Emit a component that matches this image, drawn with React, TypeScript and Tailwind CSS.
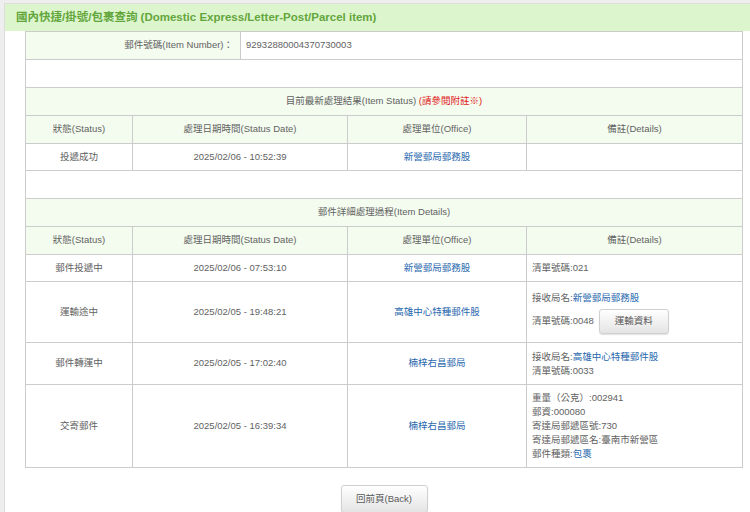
import React from 'react';

const font = { fontFamily: '"Liberation Sans", Arial, "Noto Sans CJK TC", sans-serif' };

type Detail = { label: string; value: string; link?: boolean };

type Row = {
  status: string;
  date: string;
  office: string;
  height: string;
  details: Detail[];
  button?: boolean;
};

const latest: Row[] = [
  { status: '投遞成功', date: '2025/02/06 - 10:52:39', office: '新營郵局郵務股', height: 'h-[27px]', details: [] },
];

const history: Row[] = [
  {
    status: '郵件投遞中',
    date: '2025/02/06 - 07:53:10',
    office: '新營郵局郵務股',
    height: 'h-[27px]',
    details: [{ label: '清單號碼:', value: '021' }],
  },
  {
    status: '運輸途中',
    date: '2025/02/05 - 19:48:21',
    office: '高雄中心特種郵件股',
    height: 'h-[61px]',
    details: [
      { label: '接收局名:', value: '新營郵局郵務股', link: true },
      { label: '清單號碼:', value: '0048' },
    ],
    button: true,
  },
  {
    status: '郵件轉運中',
    date: '2025/02/05 - 17:02:40',
    office: '楠梓右昌郵局',
    height: 'h-[42px]',
    details: [
      { label: '接收局名:', value: '高雄中心特種郵件股', link: true },
      { label: '清單號碼:', value: '0033' },
    ],
  },
  {
    status: '交寄郵件',
    date: '2025/02/05 - 16:39:34',
    office: '楠梓右昌郵局',
    height: 'h-[83px]',
    details: [
      { label: '重量（公克）:', value: '002941' },
      { label: '郵資:', value: '000080' },
      { label: '寄達局郵遞區號:', value: '730' },
      { label: '寄達局郵遞區名:', value: '臺南市新營區' },
      { label: '郵件種類:', value: '包裹', link: true },
    ],
  },
];

const cell = 'border-r border-b border-[#cccccc] flex items-center';

const GrayButton = ({ children, className }: { children: React.ReactNode; className?: string }) => (
  <button
    className={`border border-[#d0d0d0] rounded-[3px] bg-gradient-to-b from-[#ffffff] to-[#e4e4e4] text-[#5a5a5a] shadow-[0_1px_1px_rgba(0,0,0,0.12)] ${className ?? ''}`}
    style={font}
  >
    {children}
  </button>
);

const ColumnHeader = () => (
  <div className="flex h-[28px] bg-[#f4fcef]">
    <div className={`${cell} w-[107px] justify-center`}>狀態(Status)</div>
    <div className={`${cell} w-[215px] justify-center`}>處理日期時間(Status Date)</div>
    <div className={`${cell} w-[179px] justify-center`}>處理單位(Office)</div>
    <div className={`${cell} w-[216px] justify-center`}>備註(Details)</div>
  </div>
);

const DataRow = ({ row }: { row: Row }) => (
  <div className={`flex ${row.height}`}>
    <div className={`${cell} w-[107px] justify-center`}>{row.status}</div>
    <div className={`${cell} w-[215px] justify-center`}>{row.date}</div>
    <div className={`${cell} w-[179px] justify-center text-[#2767ad]`}>{row.office}</div>
    <div className={`${cell} w-[216px] flex-col !items-start justify-center px-[5px] leading-[14px]`}>
      {row.details.map((d, i) =>
        row.button && i === row.details.length - 1 ? (
          <div key={i} className="flex items-center mt-[4px]">
            <span>
              {d.label}
              {d.value}
            </span>
            <GrayButton className="ml-[5px] w-[70px] h-[25px] text-[9.5px]">運輸資料</GrayButton>
          </div>
        ) : (
          <div key={i}>
            {d.label}
            <span className={d.link ? 'text-[#2767ad]' : ''}>{d.value}</span>
          </div>
        )
      )}
    </div>
  </div>
);

const SectionTitle = ({ children }: { children: React.ReactNode }) => (
  <div className="flex h-[28px] bg-[#f4fcef]">
    <div className={`${cell} w-[717px] justify-center`}>{children}</div>
  </div>
);

const EmptyRow = () => (
  <div className="flex h-[28px]">
    <div className={`${cell} w-[717px]`} />
  </div>
);

export default function App() {
  return (
    <div className="min-h-screen bg-[#eeeeee] pt-[3px] pl-[4px]" style={font}>
      <div className="bg-white border-l border-t border-[#dddddd] min-h-[509px]">
        <div className="h-[27px] bg-[#ddf5cd] flex items-center pl-[11px] text-[11.5px] font-bold text-[#63a63c]">
          國內快捷/掛號/包裹查詢 (Domestic Express/Letter-Post/Parcel item)
        </div>

        <div className="ml-[20px] w-[718px] border-l border-t border-[#cccccc] text-[9.5px] text-[#626262]">
          <div className="flex h-[28px]">
            <div className={`${cell} w-[215px] justify-end pr-[7px] bg-[#f4fcef]`}>郵件號碼(Item Number)：</div>
            <div className={`${cell} w-[502px] pl-[5px]`}>92932880004370730003</div>
          </div>
          <EmptyRow />
          <SectionTitle>
            目前最新處理結果(Item Status)&nbsp;<span className="text-[#e02020]">(請參閱附註※)</span>
          </SectionTitle>
          <ColumnHeader />
          {latest.map((r, i) => (
            <DataRow key={i} row={r} />
          ))}
          <EmptyRow />
          <SectionTitle>郵件詳細處理過程(Item Details)</SectionTitle>
          <ColumnHeader />
          {history.map((r, i) => (
            <DataRow key={i} row={r} />
          ))}
        </div>

        <div className="ml-[20px] w-[718px] flex justify-center pt-[17px]">
          <GrayButton className="w-[87px] h-[28px] text-[9.5px]">回前頁(Back)</GrayButton>
        </div>
      </div>
    </div>
  );
}
